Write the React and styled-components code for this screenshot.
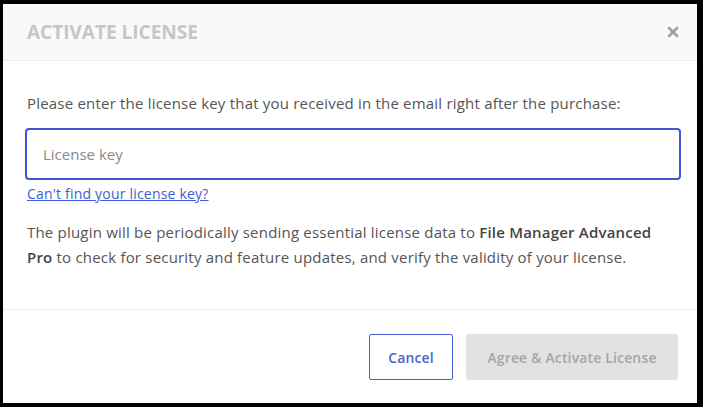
import React from 'react';
import styled, { createGlobalStyle } from 'styled-components';

const GlobalStyle = createGlobalStyle`
  html, body {
    margin: 0;
    padding: 0;
    background: #000;
  }
  body {
    font-family: "Open Sans", "Noto Sans", sans-serif;
  }
`

const Frame = styled.div`
  width: 703px;
  height: 407px;
  box-sizing: border-box;
  padding: 4px 6px 4px 3px;
  background: #000;
`

const Dialog = styled.div`
  height: 100%;
  background: #fff;
  display: flex;
  flex-direction: column;
`

const Header = styled.div`
  height: 56px;
  display: flex;
  align-items: center;
  justify-content: space-between;
  padding: 0 18px 0 24px;
  background: #f9f9f9;
  border-bottom: 1px solid #ececec;
`

const Title = styled.h2`
  margin: 0;
  font-size: 19px;
  font-weight: 700;
  color: #c6c6c6;
  letter-spacing: 0;
`

const Close = styled.button`
  border: 0;
  background: none;
  padding: 0;
  width: 12px;
  height: 12px;
  display: flex;
  cursor: pointer;
`

const Body = styled.div`
  padding: 31px 16px 0 22px;
  flex: 1;
  border-bottom: 1px solid #ededed;
`

const Text = styled.p`
  margin: 0;
  padding-left: 2px;
  padding-right: ${p => p.pr || 0}px;
  font-size: 15px;
  letter-spacing: 0.2px;
  line-height: ${p => p.lh || 22}px;
  color: #555;
  margin-top: ${p => p.mt || 0}px;

  b {
    font-weight: 600;
    color: #444;
  }
`

const Input = styled.input`
  display: block;
  box-sizing: border-box;
  width: 100%;
  height: 52px;
  margin-top: 14px;
  padding: 0 16px;
  border: 2px solid #3e55d6;
  border-radius: 4px;
  font-family: inherit;
  font-size: 15px;
  color: #333;
  outline: none;

  &::placeholder {
    color: #8a8a8a;
  }
`

const Link = styled.a`
  display: inline-block;
  margin-top: 4px;
  padding-left: 2px;
  font-size: 14px;
  letter-spacing: 0.2px;
  line-height: 20px;
  color: #3d5ed8;
  text-decoration: underline;
`

const Footer = styled.div`
  display: flex;
  justify-content: flex-end;
  gap: 13px;
  padding: 24px 19px 23px 0;
`

const Button = styled.button`
  height: 46px;
  width: ${p => p.w}px;
  box-sizing: border-box;
  padding: 0;
  font-family: inherit;
  font-size: 14px;
  letter-spacing: 0.15px;
  font-weight: 600;
  border-radius: 2px;
  cursor: pointer;
  border: 1px solid ${p => (p.primary ? '#e2e2e2' : '#4a63d6')};
  background: ${p => (p.primary ? '#e2e2e2' : '#fff')};
  color: ${p => (p.primary ? '#a6a6a6' : '#4a5fd4')};
`

export default function App() {
  return (
    <>
      <GlobalStyle />
      <Frame>
        <Dialog>
          <Header>
            <Title>ACTIVATE LICENSE</Title>
            <Close aria-label="Close">
              <svg width="12" height="12" viewBox="0 0 12 12">
                <path d="M2 2L10 10M10 2L2 10" stroke="#a0a0a0" strokeWidth="2.6" strokeLinecap="round" />
              </svg>
            </Close>
          </Header>
          <Body>
            <Text>Please enter the license key that you received in the email right after the purchase:</Text>
            <Input placeholder="License key" />
            <Link href="#">Can't find your license key?</Link>
            <Text lh={25} mt={16} pr={12}>
              The plugin will be periodically sending essential license data to <b>File Manager Advanced Pro</b> to check for security and feature updates, and verify the validity of your license.
            </Text>
          </Body>
          <Footer>
            <Button w={84}>Cancel</Button>
            <Button primary w={212} disabled>Agree &amp; Activate License</Button>
          </Footer>
        </Dialog>
      </Frame>
    </>
  );
}
